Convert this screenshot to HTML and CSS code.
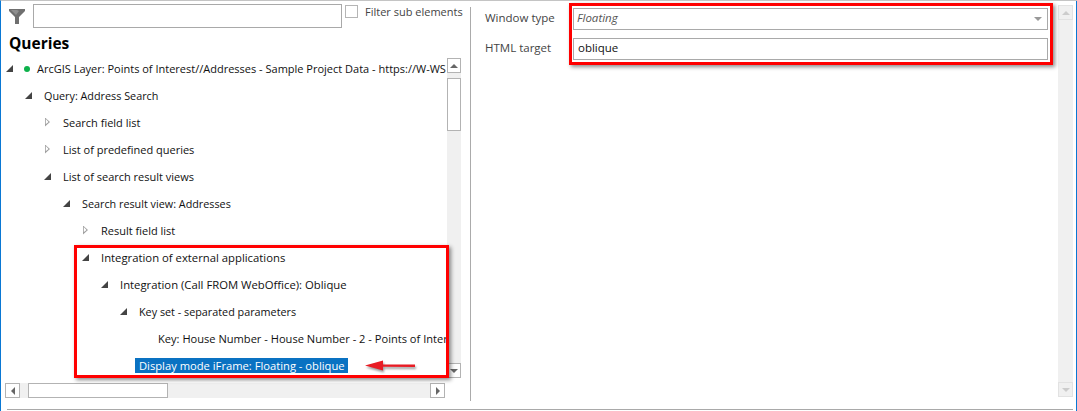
FILE: index.html
```html
<!DOCTYPE html>
<html lang="en">
<head>
<meta charset="utf-8">
<title>Queries</title>
<link rel="stylesheet" href="styles.css">
</head>
<body>
<div class="window">
  <div class="panes">
    <section class="left">
      <div class="filter">
        <svg class="funnel" width="16" height="16" viewBox="0 0 16 16"><path d="M0 1h16v2L10 9v7l-4-0V9L0 3z" fill="#6f6f6f"/><path d="M2 2h6l2 1-3 4z" fill="#8f8f8f"/></svg>
        <input class="filter-input" type="text" aria-label="Filter">
        <span class="check"></span>
        <span class="check-label">Filter sub elements</span>
      </div>
      <h1 class="title">Queries</h1>
      <div class="tree-wrap">
        <div class="tree-col">
          <ul class="tree">
            <li class="row l0"><i class="tw open"></i><i class="dot"></i><span>ArcGIS Layer: Points of Interest//Addresses - Sample Project Data - https://W-WS</span></li>
            <li class="row l1"><i class="tw open"></i><span>Query: Address Search</span></li>
            <li class="row l2"><i class="tw closed"></i><span>Search field list</span></li>
            <li class="row l2"><i class="tw closed"></i><span>List of predefined queries</span></li>
            <li class="row l2"><i class="tw open"></i><span>List of search result views</span></li>
            <li class="row l3"><i class="tw open"></i><span>Search result view: Addresses</span></li>
            <li class="row l4"><i class="tw closed"></i><span>Result field list</span></li>
            <li class="row l4 wide"><i class="tw open"></i><span>Integration of external applications</span></li>
            <li class="row l5 wide"><i class="tw open"></i><span>Integration (Call FROM WebOffice): Oblique</span></li>
            <li class="row l6"><i class="tw open"></i><span>Key set - separated parameters</span></li>
            <li class="row l7"><i class="tw"></i><span>Key: House Number - House Number - 2 - Points of Interest</span></li>
            <li class="row l6b"><span class="sel">Display mode iFrame: Floating - oblique</span></li>
          </ul>
          <div class="hbar">
            <span class="sb-btn"><i class="ar left-ar"></i></span>
            <span class="hthumb"></span>
            <span class="sb-btn"><i class="ar right-ar"></i></span>
          </div>
        </div>
        <div class="vbar">
          <span class="sb-btn"><i class="ar up-ar"></i></span>
          <span class="vthumb"></span>
          <span class="sb-btn"><i class="ar down-ar"></i></span>
        </div>
      </div>
    </section>
    <section class="right">
      <div class="form">
        <label class="lbl">Window type</label>
        <div class="field combo"><em>Floating</em><i class="ar down-ar soft"></i></div>
        <label class="lbl">HTML target</label>
        <div class="field">oblique</div>
      </div>
      <div class="vbar disabled">
        <span class="sb-btn"><i class="ar up-ar"></i></span>
        <span class="sb-fill"></span>
        <span class="sb-btn"><i class="ar down-ar"></i></span>
      </div>
    </section>
  </div>
  <div class="mark box-tree"></div>
  <div class="mark box-form"></div>
  <svg class="arrow" width="54" height="12" viewBox="0 0 54 12"><path d="M0 5.5L18 0.5V4.5L50 4.5V7L18 6.8V10.5z" fill="#e81c24"/></svg>
</div>
</body>
</html>
```
FILE: styles.css
```css
* { box-sizing: border-box; }
html, body { margin: 0; padding: 0; background: #fff; }
.window {
  position: relative;
  width: 1077px;
  height: 411px;
  overflow: hidden;
  background: #fff;
  border-left: 1px solid #0a78d4;
  border-top: 1px solid #c4c4c4;
  font: 11px "Open Sans", "Noto Sans", sans-serif;
  color: #111;
}
.window::after {
  content: "";
  position: absolute;
  right: 0;
  top: 0;
  bottom: 0;
  width: 1px;
  background: #0a78d4;
}
.panes {
  display: flex;
  height: 409px;
  margin-left: 6px;
  margin-right: 4px;
  border-bottom: 1px solid #a9a9a9;
}
.left { width: 470px; margin-left: -6px; padding-left: 4px; border-right: 1px solid #ababab; margin-top: 6px; height: 394px; flex: none; }
.filter { display: flex; align-items: flex-start; height: 24px; margin-top: -3px; padding-left: 4px; }
.funnel { margin: 4px 8px 0 0; flex: none; }
.filter-input { width: 309px; height: 24px; border: 1px solid #a9a9a9; padding: 0; background: #fff; flex: none; }
.check { width: 13px; height: 13px; border: 1px solid #b5b5b5; margin: 1px 7px 0 3px; flex: none; }
.check-label { color: #444; font-size: 11px; line-height: 16px; white-space: nowrap; }
.title { margin: 4px 0 0 4px; font: 700 15.5px/22px "Open Sans", sans-serif; color: #000; }
.tree-wrap { display: flex; margin-top: 4px; }
.tree-col { width: 442px; flex: none; font-size: 11px; }
.tree { list-style: none; margin: -3px 0 0; padding: 0; height: 325px; overflow: hidden; }
.row { display: flex; align-items: center; height: 27px; white-space: nowrap; overflow: hidden; }
.row.l0 { padding-left: 0; }
.row.l1 { padding-left: 19px; font-size: 10.8px; }
.row.l2 { padding-left: 38px; }
.row.l3 { padding-left: 57px; font-size: 10.8px; }
.row.l4 { padding-left: 76px; }
.row.l5 { padding-left: 95px; }
.row.l6 { padding-left: 114px; font-size: 10.8px; }
.row.l7 { padding-left: 133px; font-size: 11.1px; }
.row.l6b { padding-left: 130px; font-size: 11.2px; }
.row.wide { font-size: 11.3px; }
.tw { flex: none; width: 20px; height: 10px; position: relative; display: block; }
.tw.open::before {
  content: "";
  position: absolute;
  left: 1px;
  top: 1px;
  width: 0;
  height: 0;
  border-left: 7px solid transparent;
  border-bottom: 7px solid #444;
}
.tw.closed::before {
  content: "";
  position: absolute;
  left: 2px;
  top: 0;
  width: 5px;
  height: 9px;
  background: #a0a0a0;
  clip-path: polygon(0 0, 100% 50%, 0 100%, 0 80%, 70% 50%, 16% 18%, 16% 82%, 0 100%);
}
.row.l0 .tw { width: 19px; }
.dot { flex: none; width: 6px; height: 6px; border-radius: 50%; background: #0db14b; margin-right: 7px; }
.sel { background: #0a72c2; color: #fff; padding: 0 3px 0 4px; line-height: 15px; height: 15px; display: inline-block; }
.hbar { display: flex; align-items: stretch; height: 15px; background: #f0f0f0; margin-top: 3px; width: 440px; }
.hthumb { width: 140px; margin-left: 8px; margin-right: auto; background: #fff; border: 1px solid #b3b3b3; }
.sb-btn { width: 15px; height: 15px; flex: none; background: #fff; border: 1px solid #b3b3b3; display: flex; align-items: center; justify-content: center; }
.vbar { width: 14px; flex: none; display: flex; flex-direction: column; background: #f0f0f0; height: 320px; }
.vbar .sb-btn { width: 14px; }
.vthumb { height: 53px; margin-top: 5px; margin-bottom: auto; background: #fff; border: 1px solid #b3b3b3; }
.ar { display: block; width: 0; height: 0; border: 4px solid transparent; }
.up-ar { border-bottom-color: #666; border-top-width: 0; }
.down-ar { border-top-color: #666; border-bottom-width: 0; }
.left-ar { border-right-color: #666; border-left-width: 0; }
.right-ar { border-left-color: #666; border-right-width: 0; }
.right { flex: 1; display: flex; justify-content: space-between; min-width: 0; padding-top: 4px; height: 396px; }
.form { width: 586px; padding: 3px 0 0 14px; display: grid; grid-template-columns: 88px 475px; grid-auto-rows: 22px; row-gap: 8px; align-items: center; align-content: start; }
.lbl { color: #444; font-size: 11.5px; padding-bottom: 3px; }
.field { height: 22px; border: 1px solid #a9a9a9; background: #fff; padding: 0 4px; font-size: 11.5px; line-height: 18px; color: #111; }
.combo { display: flex; align-items: center; justify-content: space-between; padding: 0 5px 2px 3px; }
.combo em { color: #555; }
.soft { border-top-color: #999; margin-top: 2px; }
.vbar.disabled { width: 15px; height: 392px; }
.disabled .sb-btn { width: 15px; background: #f0f0f0; border-color: #e2e2e2; }
.disabled .ar { border-top-color: #ccc; border-bottom-color: #ccc; }
.disabled .up-ar { border-top-color: transparent; }
.disabled .down-ar { border-bottom-color: transparent; }
.sb-fill { flex: 1; }
.mark { position: absolute; border: 3px solid #f00; box-shadow: 2px 2px 4px rgba(0,0,0,.45); pointer-events: none; }
.box-tree { left: 73px; top: 244px; width: 375px; height: 133px; }
.box-form { left: 568px; top: 2px; width: 484px; height: 62px; }
.arrow { position: absolute; left: 364px; top: 359px; filter: drop-shadow(1px 2px 1px rgba(0,0,0,.4)); }
```
